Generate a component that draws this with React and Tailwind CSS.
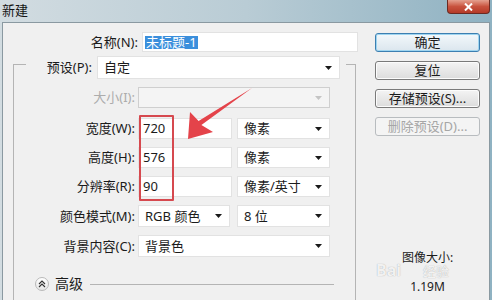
import React from 'react';

const Arrow = ({ dim }) => (
  <svg width="7" height="4" viewBox="0 0 7 4" className="shrink-0">
    <path d="M0 0h7L3.5 4z" fill={dim ? '#c4c4c4' : '#1a1a1a'} />
  </svg>
);

const Select = ({ className, children, dim }) => (
  <div className={`h-full flex items-center justify-between pl-[6px] pr-[7px] border ${dim ? 'bg-[#f4f4f4] border-[#cfcfcf]' : 'bg-white border-[#e2e2e2]'} ${className}`}>
    <span className="text-[13px] leading-none text-[#1b1b1b]">{children}</span>
    <Arrow dim={dim} />
  </div>
);

const Input = ({ className, children }) => (
  <div className={`h-full flex items-center pl-[4px] bg-white border border-[#e2e2e2] ${className}`}>
    <span className="text-[13px] leading-none text-[#1b1b1b]">{children}</span>
  </div>
);

const Label = ({ children, dim }) => (
  <div className={`w-[124px] pr-[3px] text-right text-[13px] leading-none ${dim ? 'text-[#acacac]' : 'text-[#1b1b1b]'}`}>
    {children}
  </div>
);

const Button = ({ children, primary, disabled }) => (
  <div
    className={`h-[19px] w-[105px] flex items-center justify-center rounded-[3px] border text-[13px] leading-none ${
      primary
        ? 'border-[#3c7fb1] bg-gradient-to-b from-[#f3f8fb] to-[#dbe6ee] text-[#1b1b1b] shadow-[inset_0_0_0_1px_#9fd5f0]'
        : disabled
        ? 'border-[#b8bcbf] bg-[#f4f4f4] text-[#a6a6a6]'
        : 'border-[#7a7a7a] bg-gradient-to-b from-[#f4f4f4] to-[#dcdcdc] text-[#1b1b1b] shadow-[inset_0_0_0_1px_#fcfcfc]'
    }`}
  >
    {children}
  </div>
);

export default function App() {
  return (
    <div className="relative w-[492px] h-[300px] overflow-hidden bg-gradient-to-r from-[#d2dce1] via-[#b9ccd5] to-[#8fb2c2] font-['Noto_Sans','Noto_Sans_CJK_SC',sans-serif]">
      {/* title bar */}
      <div className="h-[22px] flex items-start">
        <div className="pl-[2px] pt-[3px] text-[13px] leading-[15px] text-[#151515]">新建</div>
        <div className="ml-auto mr-[2px] w-[43px] h-[14px] rounded-b-[4px] border border-t-0 border-[#6b2a22] bg-gradient-to-b from-[#e4a090] via-[#c8523e] to-[#b53a28] flex items-center justify-center">
          <svg width="9" height="8" viewBox="0 0 9 8">
            <path d="M1 0.5l7 7M8 0.5l-7 7" stroke="#fff" strokeWidth="2" />
          </svg>
        </div>
      </div>

      {/* body */}
      <div className="mx-[2px] h-[278px] bg-[#f0f0f0] border-l border-t border-r border-[#8a99a1] flex">
        {/* left column */}
        <div className="w-[366px] flex flex-col">
          <div className="mt-[9px] h-[20px] flex items-center">
            <div className="w-[135px] text-right text-[13px] leading-none text-[#1b1b1b]">名称(N):</div>
            <div className="ml-[4px] w-[216px] h-full bg-white border border-[#e2e2e2] flex items-center pl-[2px]">
              <span className="bg-[#3b8fdc] text-white text-[13px] leading-[13px] px-[1px]">未标题-1</span>
            </div>
          </div>

          {/* group box */}
          <div className="ml-[10px] mt-[12px] w-[343px] flex-1 border-l border-t border-r border-[#b4b4b4] flex flex-col">
            <div className="-mt-[9px] ml-[12px] w-[320px] h-[23px] bg-[#f0f0f0] flex items-center">
              <div className="w-[66px] text-right text-[13px] leading-none text-[#1b1b1b]">预设(P):</div>
              <Select className="ml-[5px] w-[243px]">自定</Select>
            </div>

            <div className="mt-[8px] h-[21px] flex items-center">
              <Label dim>大小(I):</Label>
              <Select dim className="w-[192px]"></Select>
            </div>

            <div className="mt-[10px] h-[21px] flex items-center">
              <Label>宽度(W):</Label>
              <Input className="w-[94px]">720</Input>
              <Select className="ml-[5px] w-[93px]">像素</Select>
            </div>

            <div className="mt-[8px] h-[21px] flex items-center">
              <Label>高度(H):</Label>
              <Input className="w-[94px]">576</Input>
              <Select className="ml-[5px] w-[93px]">像素</Select>
            </div>

            <div className="mt-[8px] h-[21px] flex items-center">
              <Label>分辨率(R):</Label>
              <Input className="w-[94px]">90</Input>
              <Select className="ml-[5px] w-[93px]">像素/英寸</Select>
            </div>

            <div className="mt-[8px] h-[22px] flex items-center">
              <Label>颜色模式(M):</Label>
              <Select className="w-[92px]">RGB 颜色</Select>
              <Select className="ml-[7px] w-[93px]">8 位</Select>
            </div>

            <div className="mt-[8px] h-[22px] flex items-center">
              <Label>背景内容(C):</Label>
              <Select className="w-[192px]">背景色</Select>
            </div>

            <div className="mt-[19px] h-[16px] ml-[21px] w-[299px] flex items-center">
              <div className="w-[14px] h-[14px] rounded-full border border-[#b9b9b9] bg-gradient-to-b from-white to-[#e6e6e6] flex items-center justify-center">
                <svg width="8" height="8" viewBox="0 0 8 8">
                  <path d="M1 4l3-3 3 3M1 7l3-3 3 3" stroke="#333" strokeWidth="1.1" fill="none" />
                </svg>
              </div>
              <span className="ml-[6px] text-[14px] leading-none text-[#1b1b1b]">高级</span>
              <div className="ml-[7px] flex-1 h-px bg-[#b4b4b4]" />
            </div>
          </div>
        </div>

        {/* right column */}
        <div className="pl-[6px] flex flex-col">
          <div className="mt-[10px] flex flex-col gap-[9px]">
            <Button primary>确定</Button>
            <Button>复位</Button>
            <Button>存储预设(S)...</Button>
            <Button disabled>删除预设(D)...</Button>
          </div>
          <div className="mt-[116px] flex flex-col items-center text-[12px] leading-none text-[#1b1b1b]">
            <span>图像大小:</span>
            <span className="mt-[17px]">1.19M</span>
          </div>
        </div>
      </div>

      {/* baidu watermark */}
      <div className="absolute left-[376px] top-[262px] flex items-end text-white/85 [text-shadow:0_0_1px_#9a9a9a]">
        <span className="text-[16px] leading-none font-bold">Bai</span>
        <span className="ml-[22px] text-[13px] leading-none">经验</span>
      </div>

      {/* red annotation */}
      <div className="absolute left-[139px] top-[115px] w-[35px] h-[86px] border-2 border-[#d6494f] rounded-[1px]" />
      <svg className="absolute left-0 top-0" width="492" height="300" viewBox="0 0 492 300">
        <polygon
          points="188,139 190,112 198.6,120.9 252,88 201.4,125.1 213,132"
          fill="#e4434a"
        />
      </svg>
    </div>
  );
}
